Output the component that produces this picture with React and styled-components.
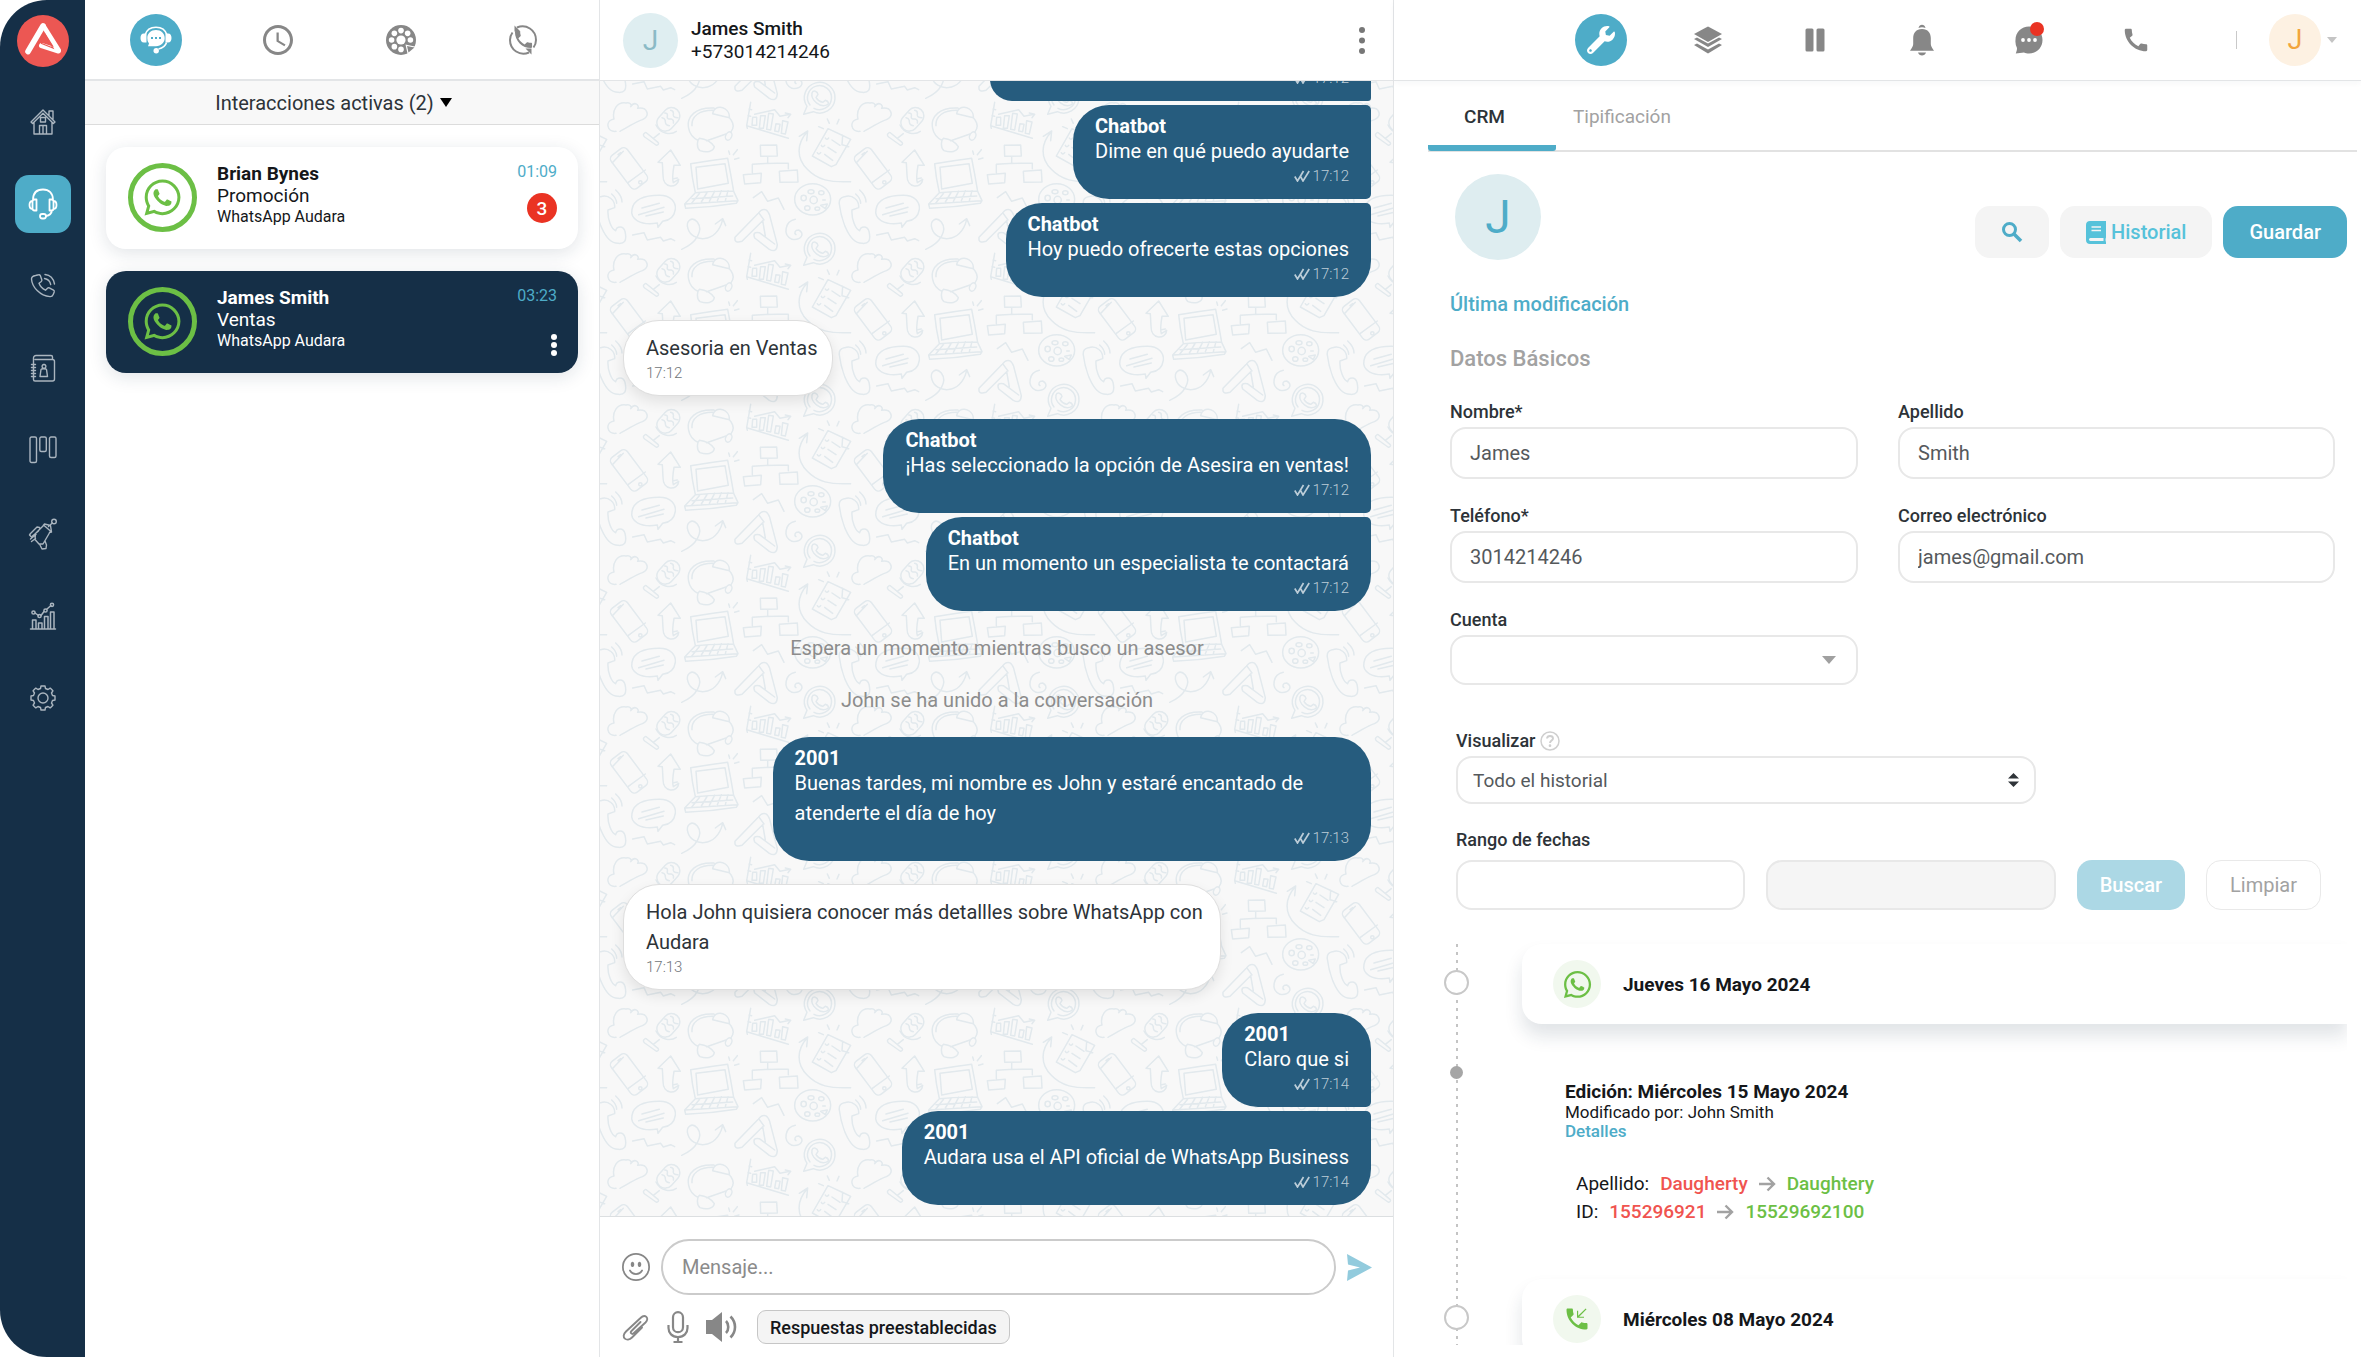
import React from "react";
import styled, { createGlobalStyle, css } from "styled-components";
import { FaWhatsapp, FaWrench } from "react-icons/fa";
import { MdCall, MdAccessTime, MdPhoneCallback } from "react-icons/md";
import { BsEmojiSmile } from "react-icons/bs";

const c = {
  navy: "#152f47",
  teal: "#4eacc8",
  bubble: "#265c7e",
  green: "#6cbf45",
  red: "#f0544f",
  ink: "#15171a",
  text: "#2d3338",
  muted: "#a2a2a2",
  icon: "#878787",
  line: "#e3e5e7",
};

const GlobalStyle = createGlobalStyle`
  *, *::before, *::after { box-sizing: border-box; }
  body {
    margin: 0;
    background: #fff;
    color: ${c.text};
    font-family: Roboto, "Liberation Sans", sans-serif;
    font-size: 19px;
  }
  button, input, select { font: inherit; color: inherit; margin: 0; }
  button { border: 0; padding: 0; background: none; cursor: pointer; }
  h1, h2, h3, p, ul, ol { margin: 0; padding: 0; list-style: none; font: inherit; }
  svg { display: block; flex: none; }
  a { text-decoration: none; }
`;

/* ---------- shell ---------- */

const Shell = styled.div`
  display: grid;
  grid-template-columns: 85px minmax(0, 515fr) minmax(0, 794fr) minmax(0, 967fr);
  height: calc(100vh - 3px);
  overflow: hidden;
`;

const Sidebar = styled.nav`
  display: flex;
  flex-direction: column;
  align-items: center;
  padding-top: 15px;
  background: ${c.navy};
  border-radius: 47px 0 0 47px;
`;

const NavGroup = styled.ul`
  display: flex;
  flex-direction: column;
  gap: 24px;
  margin-top: 26px;
`;

const NavButton = styled.button`
  display: grid;
  place-items: center;
  width: 56px;
  height: 58px;
  border-radius: 14px;
  color: ${(p) => (p.$active ? "#fff" : "#aab5bf")};
  background: ${(p) => (p.$active ? c.teal : "transparent")};
`;

const Column = styled.section`
  display: flex;
  flex-direction: column;
  min-width: 0;
  min-height: 0;
  border-right: ${(p) => (p.$last ? "0" : `1px solid ${c.line}`)};
`;

const TopBar = styled.header`
  display: flex;
  align-items: center;
  flex: none;
  height: 81px;
  border-bottom: 1px solid ${c.line};
  background: #fff;
`;

const RoundButton = styled.button`
  position: relative;
  display: grid;
  place-items: center;
  width: 52px;
  height: 52px;
  border-radius: 50%;
  color: ${(p) => (p.$active ? "#fff" : c.icon)};
  background: ${(p) => (p.$active ? c.teal : "transparent")};
`;

/* ---------- interactions ---------- */

const QueueTabs = styled(TopBar)`
  display: grid;
  grid-template-columns: repeat(4, 1fr);
  justify-items: center;
  padding: 0 15px 0 10px;
  border-bottom: 2px solid ${c.line};
`;

const QueueFilter = styled.button`
  display: flex;
  align-items: center;
  justify-content: center;
  gap: 6px;
  flex: none;
  height: 44px;
  padding-right: 17px;
  border-bottom: 1px solid #dcdcdc;
  background: #f8f8f8;
  font-size: 20px;
`;

const QueueList = styled.ul`
  display: flex;
  flex-direction: column;
  gap: 22px;
  padding: 22px 21px;
`;

const QueueCard = styled.li`
  display: flex;
  height: 102px;
  padding: 16px 21px 16px 22px;
  border-radius: 20px;
  box-shadow: 0 4px 18px rgba(21, 47, 71, 0.13);
  ${(p) =>
    p.$active
      ? css`background: ${c.navy}; color: #fff;`
      : css`background: #fff; color: ${c.ink};`}
`;

const Ring = styled.span`
  display: grid;
  place-items: center;
  width: 69px;
  height: 69px;
  border: 5px solid ${c.green};
  border-radius: 50%;
  color: ${c.green};
`;

const QueueInfo = styled.div`
  flex: 1;
  min-width: 0;
  padding-left: 20px;
  line-height: 22px;
`;

const QueueName = styled.h3`
  font-weight: 700;
`;

const QueueSource = styled.p`
  font-size: 16px;
  line-height: 20px;
`;

const QueueSide = styled.div`
  display: flex;
  flex-direction: column;
  align-items: flex-end;
  gap: 12px;
`;

const QueueTime = styled.time`
  font-size: 16px;
  line-height: 18px;
  color: ${c.teal};
`;

const Badge = styled.span`
  display: grid;
  place-items: center;
  width: 30px;
  height: 30px;
  border-radius: 50%;
  background: #ea3323;
  color: #fff;
  font-weight: 500;
`;

const CardMenu = styled.button`
  margin-top: 17px;
`;

/* ---------- conversation ---------- */

const ChatHead = styled(TopBar)`
  gap: 13px;
  padding: 0 28px 0 23px;
`;

const Avatar = styled.span`
  display: grid;
  place-items: center;
  flex: none;
  width: ${(p) => p.$size}px;
  height: ${(p) => p.$size}px;
  border-radius: 50%;
  font-size: ${(p) => p.$font}px;
  color: ${(p) => p.$color};
  background: ${(p) => p.$bg};
`;

const ContactName = styled.div`
  flex: 1;
  line-height: 23px;
  color: ${c.ink};
`;

const Strong = styled.h2`
  font-weight: 500;
`;

const ChatBody = styled.div`
  position: relative;
  display: flex;
  flex: 1;
  flex-direction: column;
  justify-content: flex-end;
  min-height: 0;
  padding: 0 22px 11px 23px;
  overflow: hidden;
  background: #f8f8f8;
`;

const Wallpaper = styled.svg`
  position: absolute;
  inset: 0;
  width: 100%;
  height: 100%;
`;

const Thread = styled.ol`
  position: relative;
  display: flex;
  flex-direction: column;
  gap: 23px;
`;

const Cluster = styled.li`
  display: flex;
  flex-direction: column;
  align-items: ${(p) => (p.$out ? "flex-end" : "flex-start")};
  gap: 4px;
`;

const bubbleBase = css`
  max-width: 80%;
  font-size: 20px;
  line-height: 30px;
  border-radius: 36px;
`;

const InBubble = styled.div`
  ${bubbleBase}
  padding: 12px 14px 12px 22px;
  border: 1px solid #dedede;
  background: #fff;
  box-shadow: 0 6px 14px rgba(0, 0, 0, 0.09);
`;

const OutBubble = styled.div`
  ${bubbleBase}
  min-width: ${(p) => (p.$wide ? "51%" : "0")};
  padding: 11px 22px 13px;
  border-top-right-radius: ${(p) => (p.$joinTop ? 5 : 36)}px;
  border-bottom-right-radius: ${(p) => (p.$joinBottom ? 5 : 36)}px;
  background: ${c.bubble};
  color: #fff;
`;

const Author = styled.h3`
  font-weight: 700;
  line-height: 20px;
`;

const Stamp = styled.div`
  display: flex;
  align-items: center;
  justify-content: ${(p) => (p.$out ? "flex-end" : "flex-start")};
  gap: 3px;
  font-size: 15px;
  font-weight: 300;
  line-height: 20px;
  color: ${(p) => (p.$out ? "#bccdd8" : "#6f7478")};
`;

const Notes = styled.li`
  margin: -12px 0;
  text-align: center;
  font-size: 20px;
  line-height: 52px;
  color: #8c8c8c;
`;

const Composer = styled.form`
  display: flex;
  flex-direction: column;
  flex: none;
  gap: 15px;
  padding: 22px 21px 13px 22px;
  border-top: 1px solid #dcdfe1;
  background: #fff;
`;

const ComposerRow = styled.div`
  display: flex;
  align-items: center;
  gap: ${(p) => p.$gap}px;
  color: ${c.icon};
`;

const MessageInput = styled.input`
  flex: 1;
  min-width: 0;
  height: 56px;
  padding: 0 19px;
  border: 2px solid #cbcbcb;
  border-radius: 28px;
  outline: none;
  background: #fff;
  font-size: 20px;
  &::placeholder { color: #8b8b8b; opacity: 1; }
`;

const IconButton = styled.button`
  display: grid;
  place-items: center;
`;

const PresetButton = styled.button`
  height: 34px;
  margin-left: 2px;
  padding: 0 12px;
  border: 1px solid #c6c6c6;
  border-radius: 9px;
  background: #f4f4f4;
  color: ${c.ink};
  font-size: 18px;
  font-weight: 500;
`;

/* ---------- crm ---------- */

const ToolBar = styled(TopBar)`
  justify-content: flex-end;
  gap: 55px;
  padding-right: 24px;
  box-shadow: 0 2px 6px rgba(21, 47, 71, 0.04);
`;

const Account = styled.button`
  display: flex;
  align-items: center;
  gap: 6px;
  margin-left: 19px;
  &::before {
    content: "";
    width: 1px;
    height: 18px;
    margin-right: 26px;
    background: #c9c9c9;
  }
`;

const AlertDot = styled.i`
  position: absolute;
  top: 8px;
  right: 11px;
  width: 14px;
  height: 14px;
  border-radius: 50%;
  background: #ea3323;
`;

const Tabs = styled.div`
  display: flex;
  flex: none;
  height: 71px;
  margin: 0 4px 0 34px;
  border-bottom: 2px solid #e2e2e2;
`;

const Tab = styled.button`
  padding: 7px 51px 0 36px;
  margin-bottom: -1px;
  border-bottom: 6px solid ${(p) => (p.$active ? c.teal : "transparent")};
  border-radius: 3px;
  font-weight: ${(p) => (p.$active ? 500 : 400)};
  color: ${(p) => (p.$active ? c.text : c.muted)};
  & + & { padding-left: 17px; }
`;

const Profile = styled.div`
  display: flex;
  align-items: center;
  justify-content: space-between;
  flex: none;
  padding: 22px 14px 0 61px;
`;

const Actions = styled.div`
  display: flex;
  gap: 11px;
  margin-top: 30px;
`;

const Button = styled.button`
  display: flex;
  align-items: center;
  justify-content: center;
  gap: 5px;
  flex: none;
  height: ${(p) => (p.$small ? 50 : 52)}px;
  padding: 0 ${(p) => (p.$small ? 23 : 26)}px;
  border-radius: 15px;
  font-size: 20px;
  font-weight: 500;
  ${(p) =>
    ({
      soft: css`background: #f4f4f4; color: #56c2da;`,
      primary: css`background: ${c.teal}; color: #fff;`,
      faded: css`background: #acd8e5; color: #fff;`,
      outline: css`border: 1px solid #e9e9e9; background: #fff; color: ${c.muted}; font-weight: 400;`,
    })[p.$kind]}
`;

const CrmForm = styled.form`
  flex: none;
  padding: 30px 26px 0 56px;
`;

const Modified = styled.a`
  display: block;
  font-size: 20px;
  font-weight: 500;
  line-height: 28px;
  color: ${c.teal};
`;

const SectionTitle = styled.h2`
  margin: 28px 0;
  font-size: 22px;
  font-weight: 500;
  line-height: 26px;
  color: ${c.muted};
`;

const FieldGrid = styled.div`
  display: grid;
  grid-template-columns: minmax(0, 408fr) minmax(0, 437fr);
  gap: 25px 40px;
`;

const Field = styled.div`
  display: flex;
  flex-direction: column;
  gap: 3px;
  width: ${(p) => p.$width || "auto"};
`;

const Label = styled.label`
  display: flex;
  align-items: center;
  gap: 5px;
  font-size: 18px;
  font-weight: 500;
  line-height: 24px;
`;

const box = css`
  width: 100%;
  min-width: 0;
  border: 2px solid #e8e8e8;
  border-radius: 16px;
  outline: none;
  background: #fff;
  color: #55595c;
`;

const Input = styled.input`
  ${box}
  height: ${(p) => (p.$date ? 50 : 52)}px;
  padding: 0 18px;
  font-size: 20px;
  &:disabled { background: #f5f5f5; }
`;

const SelectWrap = styled.div`
  position: relative;
  svg {
    position: absolute;
    top: 50%;
    right: ${(p) => p.$inset}px;
    transform: translateY(-50%);
    pointer-events: none;
  }
`;

const Select = styled.select`
  ${box}
  appearance: none;
  height: ${(p) => (p.$short ? 48 : 50)}px;
  padding: 0 15px;
`;

const Filters = styled.form`
  flex: none;
  padding: 44px 40px 0 62px;
`;

const RangeTitle = styled(Label)`
  margin: 24px 0 8px;
`;

const RangeRow = styled.div`
  display: flex;
  gap: 21px;
`;

const History = styled.div`
  flex: 1;
  min-height: 0;
  margin: 10px 14px 12px 0;
  padding: 24px 0 0 50px;
  overflow: hidden;
`;

const Timeline = styled.ol`
  min-height: 100%;
  padding-bottom: 60px;
  background: repeating-linear-gradient(#c4c4c4 0 3px, transparent 3px 8px) 12px 0 / 2px 100% no-repeat;
`;

const Entry = styled.li`
  display: grid;
  grid-template-columns: 25px minmax(0, 1fr);
  column-gap: 53px;
`;

const Marker = styled.span`
  width: 25px;
  height: 25px;
  margin-top: 26px;
  border: 2px solid #c8c8c8;
  border-radius: 50%;
  background: #fff;
`;

const SmallMarker = styled.span`
  justify-self: center;
  width: 13px;
  height: 13px;
  margin-top: 42px;
  border-radius: 50%;
  background: #a6a6a6;
`;

const DayCard = styled.div`
  display: flex;
  align-items: center;
  gap: 22px;
  height: 80px;
  padding-left: 31px;
  border-radius: 20px 0 0 20px;
  background: #fff;
  box-shadow: 0 12px 18px rgba(21, 47, 71, 0.13);
  color: ${c.ink};
  font-weight: 700;
`;

const ChannelIcon = styled.span`
  display: grid;
  place-items: center;
  width: 48px;
  height: 48px;
  border-radius: 50%;
  background: #f1f8ee;
  color: ${c.green};
`;

const Edit = styled.div`
  padding: 57px 0 53px 43px;
  font-size: 17px;
  line-height: 19px;
  color: ${c.ink};
`;

const EditTitle = styled.h3`
  font-size: 19px;
  font-weight: 700;
  line-height: 22px;
`;

const DetailLink = styled.a`
  display: block;
  font-weight: 500;
  color: ${c.teal};
`;

const Changes = styled.ul`
  margin: 29px 0 0 11px;
  font-size: 19px;
  line-height: 28px;
`;

const Change = styled.li`
  display: flex;
  align-items: center;
  gap: 11px;
`;

const Before = styled.span`
  font-weight: 500;
  color: ${c.red};
`;

const After = styled.span`
  font-weight: 500;
  color: ${c.green};
`;

/* ---------- drawings ---------- */

const Line = ({ size = 28, w = 1.4, children, vb = "0 0 28 28" }) => (
  <svg width={size} height={size} viewBox={vb} fill="none" stroke="currentColor" strokeWidth={w} strokeLinecap="round" strokeLinejoin="round" aria-hidden="true">
    {children}
  </svg>
);

const Logo = () => (
  <svg width="52" height="52" viewBox="0 0 52 52" role="img" aria-label="Audara">
    <circle cx="26" cy="26" r="26" fill="#ec5753" />
    <g stroke="#fff" strokeLinecap="round" fill="none">
      <path d="M11 36.500 26 11" strokeWidth="5.600" />
      <path d="M26.500 11 41.500 35" strokeWidth="4.600" />
      <path d="M24.500 30.500 41.500 36" strokeWidth="5" />
    </g>
    <path d="M27.500 18.500 36 33 24 28.200" stroke="#ec5753" strokeWidth="1.200" fill="none" />
  </svg>
);

const Home = () => (
  <Line>
    <path d="M2 14 14 2l12 12-1.600 1.600L14 5.200 3.600 15.600ZM5 14.500V26h18V14.500M20 8V3h4v9M10.500 26v-8.500h7V26M14 17.500V26M11.500 9.500h5v4.500h-5z" />
  </Line>
);
const Headset = () => (
  <Line size={32} vb="0 0 32 32" w={1.8}>
    <path d="M6 12C6 5 10 1.500 16 1.500S26 5 26 12M9.500 11.500v11H7.500c-1.500 0-2-1-2-2v-7c0-1 .5-2 2-2zM22.500 11.500v11h2c1.500 0 2-1 2-2v-7c0-1-.5-2-2-2zM5.500 13c-2 0-3 1.500-3 4s1 4 3 4M26.500 13c2 0 3 1.500 3 4s-1 4-3 4M25 22.500c-.5 3-2.500 5-6 5.500" />
    <rect x="13" y="26" width="6" height="4.500" rx="2.200" />
  </Line>
);
const CallWaves = () => (
  <Line>
    <path d="M6.500 3.500 9.600 2.800c.8-.2 1.400.2 1.700.8l1.500 4.200c.2.700 0 1.300-.5 1.700L10 11.200c1 2.700 3.500 5.500 6.500 7l2-2c.5-.5 1.200-.6 1.800-.3l4.200 2.200c.7.400.9 1 .7 1.800l-1 2.600c-.5 1.300-1.700 2.200-3.200 2.100C11 24 3 15 2.500 7c0-1.800 1.500-3 4-3.500ZM16 2.500c5 .5 8.500 4 9.500 9.500M15.500 6.500c3 .5 5.500 2.800 6.200 6" />
  </Line>
);
const ContactBook = () => (
  <Line>
    <path d="M6 5.500h17.500a2 2 0 0 1 2 2V25a2 2 0 0 1-2 2H6a1.500 1.500 0 0 1-1.500-1.500V4A2.500 2.500 0 0 1 7 1.500h15a1.500 1.500 0 0 1 1.500 1.500v2.500M2.500 10.500h4M2.500 13.500h4M2.500 16.500h4M2.500 19.500h4M2.500 22.500h4M11 22.500l1-7c.3-1 5.200-1 5.500 0l1 7zM15 10.500a1.900 1.900 0 1 1-.01 0" />
  </Line>
);
const Board = () => (
  <Line>
    <rect x="1" y="1" width="6.500" height="25.500" rx="1.500" />
    <rect x="10.800" y="1" width="6.500" height="14.500" rx="1.500" />
    <rect x="20.500" y="1" width="6.500" height="20.500" rx="1.500" />
  </Line>
);
const Drill = () => (
  <Line size={32} vb="0 0 32 32">
    <circle cx="27" cy="3.500" r="2.300" />
    <path d="M25.300 5 21.500 8.500M16.500 7l7.500 6.500M16 8l1.500-2 6 1.500 1 6.500-2 .5M16 8 8.500 15.500l-.5 6 4 4.500h4L23 14M3.500 15.500l6.500-6.500 2.500.5.500 1.500M5.500 18l6-5M3.500 15.500 2.500 17l2 2M3.500 21l5.500-4.500M4.500 23.500l4-3M12.500 26l2.500 5 4-.5.5-3.500-1.500-4" />
  </Line>
);
const Growth = () => (
  <Line w={1.5}>
    <path d="M1.500 27h25M3.500 27v-9H7v9M9.500 27v-6H13v6M15.500 27V14.500H19V27M21.500 27V10H25v17M6 11l3.500 2.500M12 13.500 15 9.500M18 7l4-3.500" />
    <circle cx="4.500" cy="10.500" r="1.600" />
    <circle cx="10.500" cy="14" r="1.600" />
    <circle cx="16.500" cy="8.500" r="1.600" />
    <circle cx="23" cy="2.800" r="1.600" />
  </Line>
);
const Gear = () => (
  <Line>
    <circle cx="14" cy="14" r="5" />
    <path d="M11.500 4.500 12 2h4l.5 2.500 2.500 1 2.200-1.400 2.700 2.700L22.500 9l1 2.500 2.500.5v4l-2.500.5-1 2.500 1.400 2.200-2.700 2.700L19 22.500l-2.500 1L16 26h-4l-.5-2.500-2.500-1-2.200 1.400-2.700-2.700L5.500 19l-1-2.500L2 16v-4l2.500-.5 1-2.500-1.400-2.200 2.700-2.700L9 5.500Z" />
  </Line>
);

const SupportBubble = () => (
  <svg width="32" height="28" viewBox="0 0 32 28" aria-hidden="true">
    <path d="M5 9C6.500 4 10.500 1.200 16 1.200S25.500 4 27 9" fill="none" stroke="#fff" strokeWidth="1.600" />
    <path d="M4 7.500h2.500v9H4c-2.500 0-3.500-2-3.500-4.500S1.500 7.500 4 7.500ZM28 7.500h-2.500v9H28c2.500 0 3.500-2 3.500-4.500S30.500 7.500 28 7.500ZM16 4c5 0 8.700 3.400 8.700 8s-3.700 8.200-8.700 8.200H8l1-2.600A8 8 0 0 1 7.300 12C7.300 7.400 11 4 16 4Z" fill="#fff" />
    <path d="M26.500 16.500c-1 3.500-3.500 5.500-8 6.500" fill="none" stroke="#fff" strokeWidth="1.600" />
    <circle cx="16.200" cy="24.700" r="2.700" fill="#fff" />
    <path d="M11 11h2v2h-2zM15 11h2v2h-2zM19 11h2v2h-2z" fill={c.teal} />
  </svg>
);
const Dial = () => {
  const holes = [0, 90, 135, 180, 225, 270, 315];
  return (
    <svg width="32" height="32" viewBox="0 0 32 32" aria-hidden="true">
      <circle cx="16" cy="16" r="15" fill="currentColor" />
      <circle cx="16" cy="16" r="4.600" fill="#fff" />
      {holes.map((a) => (
        <circle key={a} cx={16 + 9.4 * Math.cos((a * Math.PI) / 180)} cy={16 + 9.4 * Math.sin((a * Math.PI) / 180)} r="2.800" fill="#fff" />
      ))}
      <path d="M20.500 20.500 32 23l-9 9Z" fill="#fff" />
      <path d="m22 22 7.500 1.500-6 5z" fill="currentColor" />
    </svg>
  );
};
const Redial = () => (
  <svg width="32" height="32" viewBox="0 0 32 32" aria-hidden="true">
    <g fill="none" stroke="currentColor" strokeWidth="2">
      <path d="M10 3.500c9-4 19 2.500 19 12.500 0 3-1 5.500-2.500 7.500" />
      <path d="M22 28.500C13 32.500 3 26 3 16c0-3 1-5.500 2.500-7.500" />
    </g>
    <path d="M7.500 1.500v6h6ZM24.500 30.500v-6h-6Z" fill="currentColor" />
    <svg x="7" y="6" width="19" height="19" viewBox="2 2 20 20">
      <path fill="currentColor" d="M6.620 10.790c1.440 2.830 3.760 5.140 6.590 6.590l2.200-2.200c.27-.27.67-.36 1.020-.24 1.120.37 2.330.57 3.570.57.55 0 1 .45 1 1V20c0 .55-.45 1-1 1-9.390 0-17-7.610-17-17 0-.55.45-1 1-1h3.500c.55 0 1 .45 1 1 0 1.250.2 2.450.57 3.570.11.35.03.74-.25 1.020l-2.200 2.200z" />
    </svg>
  </svg>
);
const Caret = ({ color, w = 11, h = 8 }) => (
  <svg width={w} height={h} viewBox="0 0 12 8" preserveAspectRatio="none" aria-hidden="true">
    <path d="M0 0h12L6 8z" fill={color} />
  </svg>
);
const Kebab = ({ color, h, r = 3 }) => (
  <svg width="6" height={h} viewBox={`0 0 6 ${h}`} fill={color} aria-hidden="true">
    <circle cx="3" cy={r} r={r} />
    <circle cx="3" cy={h / 2} r={r} />
    <circle cx="3" cy={h - r} r={r} />
  </svg>
);
const Checks = () => (
  <svg width="16" height="12" viewBox="0 0 16 12" fill="none" stroke="currentColor" strokeWidth="1.700" aria-hidden="true">
    <path d="M.8 6.500 3.500 11 9.500 1M6.500 6.500 9 11l6.200-10" />
  </svg>
);
const Layers = () => (
  <svg width="30" height="30" viewBox="0 0 30 30" fill="currentColor" aria-hidden="true">
    <path d="M15 1.500 29 9l-14 8L1 9Z" />
    <path d="m1 14 3-1.500 11 6 11-6 3 1.500-14 8ZM1 20l3-1.500 11 6 11-6 3 1.500-14 8.500Z" />
  </svg>
);
const Pause = () => (
  <svg width="20" height="24" viewBox="0 0 20 24" fill="currentColor" aria-hidden="true">
    <rect x=".5" y=".5" width="8" height="23" rx="1.500" />
    <rect x="11.500" y=".5" width="8" height="23" rx="1.500" />
  </svg>
);
const Bell = () => (
  <svg width="26" height="32" viewBox="0 0 26 32" fill="currentColor" aria-hidden="true">
    <path d="M9.500 4C10 1.500 11.500.7 13 .7S16 1.500 16.500 4a10 10 0 0 0-7 0ZM13 5c6 0 8.800 4.300 8.800 9v6c0 2 1.200 4 3.200 6.800H1C3 24 4.200 22 4.200 20v-6C4.200 9.300 7 5 13 5ZM9 28.500h8c-.5 2-2.200 3-4 3s-3.500-1-4-3Z" />
  </svg>
);
const ChatDots = () => (
  <svg width="28" height="28" viewBox="0 0 28 28" aria-hidden="true">
    <path d="M14 .5C21.500.5 27.500 6 27.500 14S21.500 27.500 14 27.500c-2 0-3.500-.3-5-1L.8 27.500C1.500 25.500 2 24 2 22A14 14 0 0 1 .5 14C.5 6 6.500.5 14 .5Z" fill="currentColor" />
    <circle cx="8" cy="14" r="1.900" fill="#fff" />
    <circle cx="14" cy="14" r="1.900" fill="#fff" />
    <circle cx="20" cy="14" r="1.900" fill="#fff" />
  </svg>
);
const Search = () => (
  <svg width="22" height="22" viewBox="0 0 22 22" fill="none" stroke={c.teal} aria-hidden="true">
    <circle cx="8.500" cy="8.500" r="6" strokeWidth="3" />
    <path d="m13 13 7 7" strokeWidth="3.600" />
  </svg>
);
const Book = () => (
  <svg width="20" height="23" viewBox="0 0 20 23" aria-hidden="true">
    <path d="M4 0h16v16.500c-.6 1-.6 3.500 0 4.500v2H4c-2.500 0-4-1.600-4-4V4c0-2.500 1.500-4 4-4Z" fill="currentColor" />
    <path d="M5.500 6h9.500M5.500 9.500h9.500" stroke="#f4f4f4" strokeWidth="1.400" />
    <path d="M4.500 17h13v3h-13c-2 0-2-3 0-3Z" fill="#f4f4f4" />
  </svg>
);
const Send = () => (
  <svg width="25" height="27" viewBox="0 0 25 27" aria-hidden="true">
    <path d="M0 0 25 13.500 0 27 1 16.500 13 13.500 1 10.500Z" fill="#92cbdd" />
  </svg>
);
const Clip = () => (
  <svg width="28" height="28" viewBox="0 0 28 28" fill="none" stroke="currentColor" strokeWidth="1.900" strokeLinecap="round" aria-hidden="true">
    <path d="M18.500 9 9.500 18c-1.800 1.800.4 4 2.200 2.200L23.500 9.500c4.500-4.500-.5-9-5-4.500L4 18.500c-6 6 1 11 6 6L20 14.500" />
  </svg>
);
const Mic = () => (
  <svg width="22" height="32" viewBox="0 0 22 32" fill="none" stroke="currentColor" strokeWidth="2.200" aria-hidden="true">
    <rect x="6" y="1.200" width="10" height="20" rx="5" />
    <path d="M1.500 14v3c0 5 3.500 9 9.500 9s9.500-4 9.500-9v-3M11 26v5M6.500 31h9" />
  </svg>
);
const Speaker = () => (
  <svg width="32" height="30" viewBox="0 0 32 30" fill="none" stroke="currentColor" strokeWidth="2.600" aria-hidden="true">
    <path d="M0 8h6l10-8v30L6 22H0Z" fill="currentColor" stroke="none" />
    <path d="M20 9c3 3 3 9 0 12M24.500 4.500c6 6 6 15 0 21" />
  </svg>
);
const Help = () => (
  <svg width="20" height="20" viewBox="0 0 20 20" fill="none" stroke="#cfcfcf" strokeWidth="1.500" aria-hidden="true">
    <circle cx="10" cy="10" r="9" />
    <path d="M7 7.500C7.200 5.500 8.500 5 10 5c1.700 0 3 1 3 2.500 0 2-3 2.200-3 4.500" strokeWidth="1.900" />
    <circle cx="10" cy="14.700" r=".6" />
  </svg>
);
const Sort = () => (
  <svg width="11" height="14" viewBox="0 0 11 14" fill="#2f3439" aria-hidden="true">
    <path d="M5.500 0 11 5.500H0ZM5.500 14 0 8.500h11Z" />
  </svg>
);
const Arrow = () => (
  <svg width="17" height="16" viewBox="0 0 17 16" fill="none" stroke="#a2a2a2" strokeWidth="2.400" aria-hidden="true">
    <path d="M0 8h15M8.500 1.500 15 8l-6.500 6.500" />
  </svg>
);

const Doodles = () => (
  <g id="doodles">
    <path d="M48 487C20 490 14 455 42 450 36 425 50 398 78 402 92 398 96 410 92 413 104 394 120 410 113 418 142 413 152 440 127 452 100 462 75 480 60 487" />
    <rect x="180" y="412" width="50" height="78" rx="25" transform="rotate(42 205 451)" />
    <path d="M194 432q10 0 8 10t12 8q8 2 6 12M212 424q10 2 8 12t14 10M186 446q10 2 10 12t12 12" />
    <path d="M229 487C212 500 180 494 168 468M178 494 160 508M134 492c-6 4-4 8 0 12l34 24c6 2 10-4 6-8l-34-28c-2-2-4-2-6 0Z" />
    <path d="M276 470C274 440 300 424 338 424M266 478C258 440 290 414 342 417M338 434C342 414 362 410 376 420 390 430 388 442 388 446L338 434ZM388 446C402 462 404 476 392 490M266 478C270 500 282 508 294 514M294 514C290 530 294 540 300 545 320 552 340 548 343 533 334 520 315 510 298 508ZM320 515 378 495" />
    <ellipse cx="386" cy="501" rx="9" ry="13" transform="rotate(25 386 501)" />
    <path d="M452 400 440 470 565 508M440 470l2 8M447 420l8 2M444 440l8 2M458 445h12v24h-14ZM482 440h14l-6 38h-12ZM506 433l14 2-8 48-12-2ZM528 464l12 2-4 22-12-2ZM548 455l16 4-8 36-12-2ZM464 436 524 422 540 442 570 436M556 432l16 4-8 10" />
    <rect x="57" y="83" width="60" height="124" rx="14" transform="rotate(-37 87 145)" />
    <path d="M37 128 70 94M84 188 136 150M54 104l8-6" />
    <circle cx="121" cy="187" r="5" />
    <path d="M212 90 241 136 222 136C218 160 216 178 220 188L236 178C234 206 188 208 189 165L187 128 174 127ZM220 176l12-2" />
    <path d="M272 131Q330 122 383 115 392 160 401 214 340 212 286 218 276 175 272 131ZM288 142 375 131 385 190 293 207ZM286 218 254 252 257 265Q335 262 409 250L414 242 401 214M256 252 412 242M276 236l122-8M300 218l-24 30M322 216l-18 30M344 214l-16 30M364 212l-12 30M384 212l-8 30" />
    <path d="M389 103 386 93M400 104 412 89M404 118 417 114" />
    <path d="M481 76 530 75 532 108 482 109ZM503 110V130M457 158V133Q510 128 565 130V146M430 164 484 160 482 188 434 192ZM538 154 592 150 594 186 540 187Z" />
    <path d="M622 35C590 70 588 115 622 148 652 180 690 188 752 185M598 49 623 33 620 62" />
    <path d="M684 26 752 58 708 134 694 140 637 108ZM728 46l-2 28 20 6M652 98q4 8 10 0M664 76q4 8 10 0M676 54q4 8 10 0M674 103l24 18M684 82l24 16M696 60l24 16M688 10 682-3M711 12 717-2M656 20 670 26" />
    <path d="M2 230C26 222 46 242 44 263L24 270C22 296 34 328 47 332 50 318 70 316 75 334 82 364 72 372 54 370 10 370-10 285-14 252-16 238-8 232 2 230ZM47 210C58 220 66 234 66 246M35 222C46 232 50 240 50 250" />
    <path d="M172 309C120 318 90 296 96 268 102 236 140 226 178 226 212 226 228 246 226 268 222 294 206 302 188 304L174 322ZM126 264 178 250M116 284 192 262M138 288 190 276" />
    <path d="M98 345 132 338 142 360 182 352 190 363 212 356 224 362" />
    <path d="M245 388C292 368 310 330 292 306 276 288 256 302 264 326 276 366 350 374 368 299M346 312 368 296 377 317" />
    <path d="M460 233 485 215 503 244 535 234 552 268" />
    <path d="M405 352 482 272Q500 260 509 286L532 374Q530 400 508 388L464 354Q456 334 478 338L524 372M405 352Q402 372 426 364L488 302 496 348M476 278 492 300" />
    <ellipse cx="638" cy="238" rx="54" ry="47" />
    <circle cx="641" cy="240" r="11" />
    <circle cx="611" cy="234" r="8" />
    <ellipse cx="633" cy="215" rx="9" ry="6" />
    <ellipse cx="664" cy="218" rx="8" ry="6" />
    <ellipse cx="622" cy="264" rx="8" ry="7" />
    <ellipse cx="652" cy="266" rx="7" ry="5" />
    <path d="M662 256l20-4-6 14ZM668 240h8" />
    <path d="M586 298C556 304 546 344 576 358 604 362 616 340 596 330 584 330 582 340 588 344" />
    <path d="M621 412A46 46 0 1 1 640 428L611 436ZM630 408A36 36 0 1 1 642 418" />
    <path d="M636 372C640 362 652 366 654 376L648 386Q656 398 668 400L676 394Q688 398 684 406C660 420 632 392 636 372Z" />
  </g>
);

const ChatWallpaper = () => (
  <Wallpaper aria-hidden="true">
    <defs>
      <pattern id="paper" width="732" height="453" patternUnits="userSpaceOnUse" patternTransform="translate(0 39) scale(0.33333)">
        <g fill="none" stroke="#e2e9ed" strokeWidth="4.500" strokeLinecap="round" strokeLinejoin="round">
          <Doodles />
          <use href="#doodles" x="-732" />
          <use href="#doodles" x="732" />
          <use href="#doodles" y="-453" />
          <use href="#doodles" y="453" />
          <use href="#doodles" x="-732" y="-453" />
        </g>
      </pattern>
    </defs>
    <rect width="100%" height="100%" fill="url(#paper)" />
  </Wallpaper>
);

/* ---------- data ---------- */

const nav = [
  [
    ["Inicio", Home],
    ["Interacciones", Headset],
    ["Llamadas", CallWaves],
    ["Contactos", ContactBook],
    ["Tableros", Board],
  ],
  [
    ["Campañas", Drill],
    ["Reportes", Growth],
    ["Configuración", Gear],
  ],
];

const queue = [
  { name: "Brian Bynes", topic: "Promoción", time: "01:09", unread: 3 },
  { name: "James Smith", topic: "Ventas", time: "03:23", active: true },
];

const thread = [
  {
    out: true,
    items: [
      [null, null, "17:12"],
      ["Chatbot", "Dime en qué puedo ayudarte", "17:12"],
      ["Chatbot", "Hoy puedo ofrecerte estas opciones", "17:12"],
    ],
  },
  { items: [[null, "Asesoria en Ventas", "17:12"]] },
  {
    out: true,
    items: [
      ["Chatbot", "¡Has seleccionado la opción de Asesira en ventas!", "17:12"],
      ["Chatbot", "En un momento un especialista te contactará", "17:12"],
    ],
  },
  { notes: ["Espera un momento mientras busco un asesor", "John se ha unido a la conversación"] },
  { out: true, items: [["2001", "Buenas tardes, mi nombre es John y estaré encantado de atenderte el día de hoy", "17:13"]] },
  { items: [[null, "Hola John quisiera conocer más detallles sobre WhatsApp con Audara", "17:13"]] },
  {
    out: true,
    items: [
      ["2001", "Claro que si", "17:14"],
      ["2001", "Audara usa el API oficial de WhatsApp Business", "17:14"],
    ],
  },
];

const tools = [
  ["Herramientas", () => <FaWrench size={28} />],
  ["Capas", Layers],
  ["Pausa", Pause],
  ["Notificaciones", Bell],
  ["Mensajes", ChatDots],
  ["Teléfono", () => <MdCall size={30} />],
];

const changes = [
  ["Apellido:", "Daugherty", "Daughtery"],
  ["ID:", "155296921", "15529692100"],
];

/* ---------- panels ---------- */

function Queue() {
  return (
    <Column>
      <QueueTabs>
        <RoundButton $active aria-label="Activas"><SupportBubble /></RoundButton>
        <RoundButton aria-label="En espera"><MdAccessTime size={36} /></RoundButton>
        <RoundButton aria-label="Marcador"><Dial /></RoundButton>
        <RoundButton aria-label="Devoluciones"><Redial /></RoundButton>
      </QueueTabs>
      <QueueFilter>
        Interacciones activas (2)
        <Caret color="#000" w={12} h={9} />
      </QueueFilter>
      <QueueList>
        {queue.map((q) => (
          <QueueCard key={q.name} $active={q.active}>
            <Ring><FaWhatsapp size={41} /></Ring>
            <QueueInfo>
              <QueueName>{q.name}</QueueName>
              <p>{q.topic}</p>
              <QueueSource>WhatsApp Audara</QueueSource>
            </QueueInfo>
            <QueueSide>
              <QueueTime>{q.time}</QueueTime>
              {q.unread ? (
                <Badge>{q.unread}</Badge>
              ) : (
                <CardMenu aria-label="Opciones"><Kebab color="#fff" h={22} /></CardMenu>
              )}
            </QueueSide>
          </QueueCard>
        ))}
      </QueueList>
    </Column>
  );
}

function Messages() {
  return (
    <ChatBody>
      <ChatWallpaper />
      <Thread>
        {thread.map((group, g) =>
          group.notes ? (
            <Notes key={g}>
              {group.notes.map((n) => <p key={n}>{n}</p>)}
            </Notes>
          ) : (
            <Cluster key={g} $out={group.out}>
              {group.items.map(([author, text, time], i) =>
                group.out ? (
                  <OutBubble key={i} $wide={!text} $joinTop={i > 0} $joinBottom={i < group.items.length - 1}>
                    {author && <Author>{author}</Author>}
                    {text && <p>{text}</p>}
                    <Stamp $out><Checks />{time}</Stamp>
                  </OutBubble>
                ) : (
                  <InBubble key={i}>
                    <p>{text}</p>
                    <Stamp>{time}</Stamp>
                  </InBubble>
                )
              )}
            </Cluster>
          )
        )}
      </Thread>
    </ChatBody>
  );
}

function Conversation() {
  return (
    <Column>
      <ChatHead>
        <Avatar $size={55} $font={28} $color="#8bbac6" $bg="#dfeef1">J</Avatar>
        <ContactName>
          <Strong>James Smith</Strong>
          <p>+573014214246</p>
        </ContactName>
        <IconButton aria-label="Opciones"><Kebab color="#777" h={27} /></IconButton>
      </ChatHead>
      <Messages />
      <Composer onSubmit={(e) => e.preventDefault()}>
        <ComposerRow $gap={11}>
          <IconButton type="button" aria-label="Emoji"><BsEmojiSmile size={28} /></IconButton>
          <MessageInput aria-label="Mensaje" placeholder="Mensaje..." />
          <IconButton aria-label="Enviar"><Send /></IconButton>
        </ComposerRow>
        <ComposerRow $gap={17}>
          <IconButton type="button" aria-label="Adjuntar"><Clip /></IconButton>
          <IconButton type="button" aria-label="Audio"><Mic /></IconButton>
          <IconButton type="button" aria-label="Sonido"><Speaker /></IconButton>
          <PresetButton type="button">Respuestas preestablecidas</PresetButton>
        </ComposerRow>
      </Composer>
    </Column>
  );
}

function TextField({ id, label, value }) {
  return (
    <Field>
      <Label htmlFor={id}>{label}</Label>
      <Input id={id} defaultValue={value} />
    </Field>
  );
}

function Crm() {
  return (
    <Column $last>
      <ToolBar>
        {tools.map(([label, Icon], i) => (
          <RoundButton key={label} $active={i === 0} aria-label={label}>
            <Icon />
            {label === "Mensajes" && <AlertDot />}
          </RoundButton>
        ))}
        <Account aria-label="Cuenta de usuario">
          <Avatar $size={52} $font={27} $color="#f2a53c" $bg="#fdf1e2">J</Avatar>
          <Caret color="#c4c4c4" w={10} h={6} />
        </Account>
      </ToolBar>
      <Tabs role="tablist">
        <Tab role="tab" aria-selected="true" $active>CRM</Tab>
        <Tab role="tab" aria-selected="false">Tipificación</Tab>
      </Tabs>
      <Profile>
        <Avatar $size={86} $font={46} $color={c.teal} $bg="#deedf0">J</Avatar>
        <Actions>
          <Button $kind="soft" aria-label="Buscar contacto"><Search /></Button>
          <Button $kind="soft"><Book />Historial</Button>
          <Button $kind="primary">Guardar</Button>
        </Actions>
      </Profile>
      <CrmForm>
        <Modified href="#">Última modificación</Modified>
        <SectionTitle>Datos Básicos</SectionTitle>
        <FieldGrid>
          <TextField id="nombre" label="Nombre*" value="James" />
          <TextField id="apellido" label="Apellido" value="Smith" />
          <TextField id="telefono" label="Teléfono*" value="3014214246" />
          <TextField id="correo" label="Correo electrónico" value="james@gmail.com" />
          <Field>
            <Label htmlFor="cuenta">Cuenta</Label>
            <SelectWrap $inset={22}>
              <Select id="cuenta" defaultValue=""><option value=""></option></Select>
              <Caret color="#a0a0a0" w={14} h={8} />
            </SelectWrap>
          </Field>
        </FieldGrid>
      </CrmForm>
      <Filters onSubmit={(e) => e.preventDefault()}>
        <Field $width="67%">
          <Label htmlFor="visualizar">Visualizar <Help /></Label>
          <SelectWrap $inset={17}>
            <Select id="visualizar" $short><option>Todo el historial</option></Select>
            <Sort />
          </SelectWrap>
        </Field>
        <RangeTitle htmlFor="desde">Rango de fechas</RangeTitle>
        <RangeRow>
          <Input id="desde" $date />
          <Input aria-label="Hasta" $date disabled />
          <Button $kind="faded" $small>Buscar</Button>
          <Button type="button" $kind="outline" $small>Limpiar</Button>
        </RangeRow>
      </Filters>
      <History>
        <Timeline>
          <Entry>
            <Marker />
            <DayCard>
              <ChannelIcon><FaWhatsapp size={31} /></ChannelIcon>
              Jueves 16 Mayo 2024
            </DayCard>
          </Entry>
          <Entry>
            <SmallMarker />
            <Edit>
              <EditTitle>Edición: Miércoles 15 Mayo 2024</EditTitle>
              <p>Modificado por: John Smith</p>
              <DetailLink href="#">Detalles</DetailLink>
              <Changes>
                {changes.map(([field, before, after]) => (
                  <Change key={field}>
                    {field}
                    <Before>{before}</Before>
                    <Arrow />
                    <After>{after}</After>
                  </Change>
                ))}
              </Changes>
            </Edit>
          </Entry>
          <Entry>
            <Marker />
            <DayCard>
              <ChannelIcon><MdPhoneCallback size={28} /></ChannelIcon>
              Miércoles 08 Mayo 2024
            </DayCard>
          </Entry>
        </Timeline>
      </History>
    </Column>
  );
}

export default function App() {
  return (
    <>
      <GlobalStyle />
      <Shell>
        <Sidebar aria-label="Principal">
          <Logo />
          {nav.map((group, g) => (
            <NavGroup key={g}>
              {group.map(([label, Icon]) => (
                <li key={label}>
                  <NavButton aria-label={label} $active={label === "Interacciones"}><Icon /></NavButton>
                </li>
              ))}
            </NavGroup>
          ))}
        </Sidebar>
        <Queue />
        <Conversation />
        <Crm />
      </Shell>
    </>
  );
}
